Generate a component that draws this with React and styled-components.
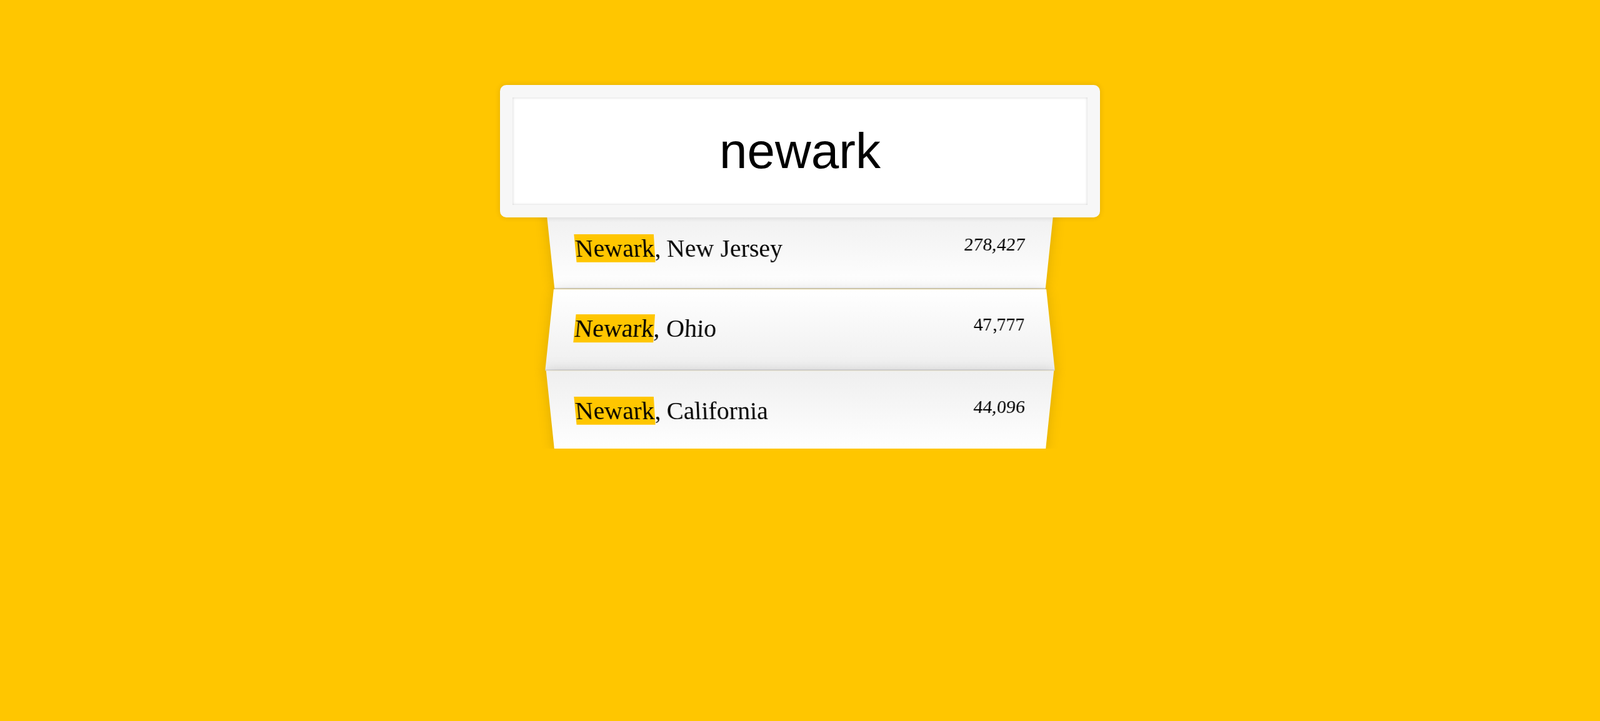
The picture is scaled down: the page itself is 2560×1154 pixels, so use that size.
import React from "react";
import styled, { createGlobalStyle } from "styled-components";

const GlobalStyle = createGlobalStyle`
  html {
    box-sizing: border-box;
    background: #ffc600;
    font-family: "Liberation Serif", "Times New Roman", serif;
    font-size: 40px;
    font-weight: 400;
  }
  *, *::before, *::after { box-sizing: inherit; }
  body { margin: 0; padding-top: 116px; }
`;

const SearchForm = styled.form`
  max-width: 800px;
  margin: 0 auto;
`;

const SearchInput = styled.input`
  display: block;
  margin: 0;
  padding: 40px;
  text-align: center;
  outline: 0;
  border: 20px solid #f7f7f7;
  width: 120%;
  left: -10%;
  position: relative;
  top: 20px;
  z-index: 2;
  border-radius: 10px;
  font-family: "Liberation Sans", Arial, sans-serif;
  font-size: 80px;
  color: #000;
  background: #fff;
  box-shadow: 0 0 10px rgba(0, 0, 0, 0.12), inset 0 0 4px rgba(0, 0, 0, 0.19);
`;

const Suggestions = styled.ul`
  margin: 0;
  padding: 0;
  position: relative;
`;

const Suggestion = styled.li`
  list-style: none;
  border-bottom: 2px solid #d8d8d8;
  box-shadow: 0 0 20px rgba(0, 0, 0, 0.14);
  margin: 0;
  padding: 40px 40px 41px;
  display: flex;
  justify-content: space-between;
  text-transform: capitalize;
  color: #000;
  &:nth-child(even) {
    transform: perspective(200px) rotateX(3deg) translateY(4px) scale(1.001);
    background: linear-gradient(to bottom, #ffffff 0%, #efefef 100%);
  }
  &:nth-child(odd) {
    transform: perspective(200px) rotateX(-3deg) translateY(6px);
    background: linear-gradient(to top, #ffffff 0%, #efefef 100%);
  }
`;

const Name = styled.span``;

const Highlight = styled.span`
  background: #ffc600;
`;

const Population = styled.span`
  font-size: 30px;
`;

const results = [
  { city: "Newark", state: "New Jersey", population: "278,427" },
  { city: "Newark", state: "Ohio", population: "47,777" },
  { city: "Newark", state: "California", population: "44,096" },
];

export default function App() {
  return (
    <>
      <GlobalStyle />
      <SearchForm onSubmit={(e) => e.preventDefault()}>
        <SearchInput type="text" defaultValue="newark" placeholder="City or State" />
        <Suggestions>
          {results.map((r, i) => (
            <Suggestion key={i}>
              <Name>
                <Highlight>{r.city}</Highlight>, {r.state}
              </Name>
              <Population>{r.population}</Population>
            </Suggestion>
          ))}
        </Suggestions>
      </SearchForm>
    </>
  );
}
